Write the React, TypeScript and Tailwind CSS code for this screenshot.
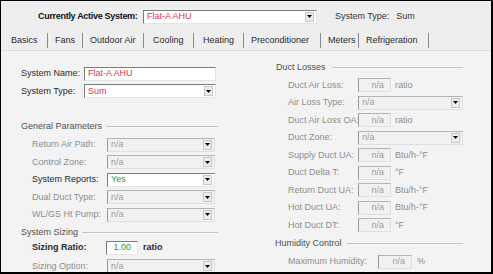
import React from 'react';

const font = { fontFamily: '"Liberation Sans", Arial, sans-serif' };

const Arrow: React.FC = () => (
  <div className="w-[9px] h-[10px] mr-[2px] flex items-center justify-center bg-[#ececec] border border-[#c8c8c8]">
    <svg width="5" height="3" viewBox="0 0 5 3">
      <path d="M0 0 H5 L2.5 3 Z" fill="#000" />
    </svg>
  </div>
);

interface FieldProps {
  value: string;
  width: string;
  color?: string;
  enabled?: boolean;
  select?: boolean;
  right?: boolean;
}

const Field: React.FC<FieldProps> = ({ value, width, color, enabled, select, right }) => (
  <div
    className={`${width} h-[14px] shrink-0 flex items-center border ${
      enabled
        ? 'bg-white border-t-[#7c7c7c] border-l-[#7c7c7c] border-r-[#e4e4e4] border-b-[#e4e4e4]'
        : 'bg-[#f1f1f1] border-t-[#b4b4b4] border-l-[#9a9a9a] border-r-[#e0e0e0] border-b-[#e0e0e0]'
    }`}
  >
    <span className={`flex-1 ${right ? 'text-right pr-[6px]' : 'pl-[3px]'} ${color ?? 'text-[#9c9c9c]'}`}>{value}</span>
    {select && <Arrow />}
  </div>
);

const Header: React.FC<{ title: string; width: string; gap: string }> = ({ title, width, gap }) => (
  <div className={`h-[14px] flex items-center text-[#505050] ${width}`}>
    <span>{title}</span>
    <div className={`flex-1 h-px bg-[#c4c4c4] ${gap}`} />
  </div>
);

const Row: React.FC<{ label: string; labelW: string; dark?: boolean; bold?: boolean; h?: string; children: React.ReactNode }> = ({
  label,
  labelW,
  dark,
  bold,
  h,
  children,
}) => (
  <div className={`${h ?? 'h-[17.5px]'} flex items-center`}>
    <span className={`${labelW} shrink-0 ${dark ? 'text-[#2a2a2a]' : 'text-[#8e8e8e]'} ${bold ? 'font-bold' : ''}`}>{label}</span>
    {children}
  </div>
);

// tab cell widths and text offsets, measured off the separators
const tabs: [string, string, string][] = [
  ['Basics', 'w-[46px]', 'pl-[10px]'],
  ['Fans', 'w-[34px]', 'pl-[7px]'],
  ['Outdoor Air', 'w-[60px]', 'pl-[7px]'],
  ['Cooling', 'w-[49px]', 'pl-[9px]'],
  ['Heating', 'w-[49px]', 'pl-[9px]'],
  ['Preconditioner', 'w-[76px]', 'pl-[7px]'],
  ['Meters', 'w-[37px]', 'pl-[7px]'],
  ['Refrigeration', 'w-[69px]', 'pl-[7px]'],
];

export default function App() {
  return (
    <div
      style={font}
      className="w-[493px] h-[274px] overflow-hidden bg-[#eeeeee] border-t border-l border-r-2 border-b-2 border-black text-[9px] leading-none whitespace-nowrap flex flex-col"
    >
      {/* Active system */}
      <div className="h-[30px] shrink-0 flex items-center pl-[37px] pt-[1px]">
        <span className="w-[105px] font-bold text-[#111] tracking-[-0.3px]">Currently Active System:</span>
        <Field value="Flat-A AHU" width="w-[174px]" color="text-[#e2354f]" enabled select />
        <span className="ml-[18px] text-[#333]">System Type:</span>
        <span className="ml-[7px] text-[#333]">Sum</span>
      </div>

      {/* Tabs */}
      <div className="h-[19px] shrink-0 flex items-center">
        {tabs.map(([t, w, pl]) => (
          <div key={t} className="flex items-center">
            <span className={`${w} ${pl} text-[#2a2a2a]`}>{t}</span>
            <div className="w-px h-[15px] bg-[#8a8a8a]" />
          </div>
        ))}
      </div>

      {/* Panel */}
      <div className="flex-1 bg-[#f3f3f3] border-t border-[#dcdcdc] flex">
        {/* Left column */}
        <div className="w-[254px] shrink-0 pl-[20px] pt-[14px] flex flex-col">
          <Row label="System Name:" labelW="w-[63px]" dark>
            <Field value="Flat-A AHU" width="w-[132px]" color="text-[#e2354f]" enabled />
          </Row>
          <Row label="System Type:" labelW="w-[63px]" dark>
            <Field value="Sum" width="w-[132px]" color="text-[#e2354f]" enabled select />
          </Row>
          <div className="mt-[19px]">
            <Header title="General Parameters" width="w-[197px]" gap="ml-[4px]" />
          </div>
          <div className="pl-[11px] mt-[3px]">
            <Row label="Return Air Path:" labelW="w-[75px]">
              <Field value="n/a" width="w-[108px]" select />
            </Row>
            <Row label="Control Zone:" labelW="w-[75px]">
              <Field value="n/a" width="w-[108px]" select />
            </Row>
            <Row label="System Reports:" labelW="w-[75px]" dark>
              <Field value="Yes" width="w-[108px]" color="text-[#2f9a35]" enabled select />
            </Row>
            <Row label="Dual Duct Type:" labelW="w-[75px]">
              <Field value="n/a" width="w-[108px]" select />
            </Row>
            <Row label="WL/GS Ht Pump:" labelW="w-[75px]">
              <Field value="n/a" width="w-[108px]" select />
            </Row>
          </div>
          <div className="mt-[2px]">
            <Header title="System Sizing" width="w-[197px]" gap="ml-[4px]" />
          </div>
          <div className="pl-[11px]">
            <Row label="Sizing Ratio:" labelW="w-[74px]" dark bold h="h-[16px]">
              <Field value="1.00" width="w-[32px]" color="text-[#2f9a35]" enabled right />
              <span className="ml-[5px] text-[#2a2a2a] font-bold">ratio</span>
            </Row>
            <div className="mt-[2px]">
              <Row label="Sizing Option:" labelW="w-[75px]">
                <Field value="n/a" width="w-[108px]" select />
              </Row>
            </div>
          </div>
        </div>

        {/* Right column */}
        <div className="flex-1 pl-[21px] pt-[9px] flex flex-col">
          <Header title="Duct Losses" width="w-[187px]" gap="ml-[6px]" />
          <div className="pl-[12px] mt-[2.5px]">
            <Row label="Duct Air Loss:" labelW="w-[70px]">
              <Field value="n/a" width="w-[33px]" right />
              <span className="ml-[4px] text-[#8e8e8e]">ratio</span>
            </Row>
            <Row label="Air Loss Type:" labelW="w-[70px]">
              <Field value="n/a" width="w-[105px]" select />
            </Row>
            <Row label="Duct Air Loss OA:" labelW="w-[70px]">
              <Field value="n/a" width="w-[33px]" right />
              <span className="ml-[4px] text-[#8e8e8e]">ratio</span>
            </Row>
            <Row label="Duct Zone:" labelW="w-[70px]">
              <Field value="n/a" width="w-[105px]" select />
            </Row>
            <Row label="Supply Duct UA:" labelW="w-[70px]">
              <Field value="n/a" width="w-[33px]" right />
              <span className="ml-[4px] text-[#8e8e8e]">Btu/h-°F</span>
            </Row>
            <Row label="Duct Delta T:" labelW="w-[70px]">
              <Field value="n/a" width="w-[33px]" right />
              <span className="ml-[4px] text-[#8e8e8e]">°F</span>
            </Row>
            <Row label="Return Duct UA:" labelW="w-[70px]">
              <Field value="n/a" width="w-[33px]" right />
              <span className="ml-[4px] text-[#8e8e8e]">Btu/h-°F</span>
            </Row>
            <Row label="Hot Duct UA:" labelW="w-[70px]">
              <Field value="n/a" width="w-[33px]" right />
              <span className="ml-[4px] text-[#8e8e8e]">Btu/h-°F</span>
            </Row>
            <Row label="Hot Duct DT:" labelW="w-[70px]">
              <Field value="n/a" width="w-[33px]" right />
              <span className="ml-[4px] text-[#8e8e8e]">°F</span>
            </Row>
          </div>
          <div className="mt-[2.5px] -ml-[1px]">
            <Header title="Humidity Control" width="w-[188px]" gap="ml-[5px]" />
          </div>
          <div className="pl-[12px] mt-[2.5px]">
            <Row label="Maximum Humidity:" labelW="w-[90px]">
              <Field value="n/a" width="w-[34px]" right />
              <span className="ml-[5px] text-[#8e8e8e]">%</span>
            </Row>
          </div>
        </div>
      </div>
    </div>
  );
}
